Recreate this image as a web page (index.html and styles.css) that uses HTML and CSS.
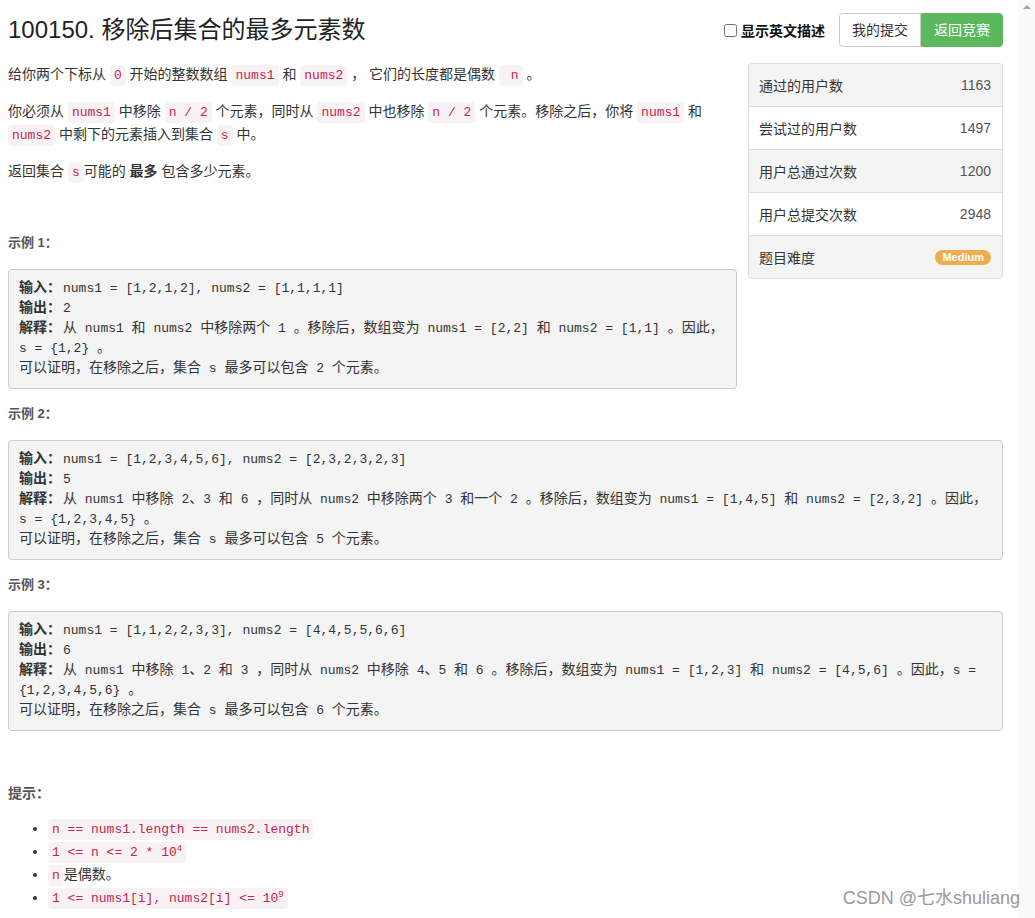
FILE: index.html
```html
<!DOCTYPE html>
<html lang="zh-CN">
<head>
<meta charset="utf-8">
<title>100150. 移除后集合的最多元素数</title>
<link rel="stylesheet" href="styles.css">
</head>
<body>
<div class="page">
  <main class="main">
    <header class="head">
      <h3 class="title"><span class="title-no">100150.</span> 移除后集合的最多元素数</h3>
      <div class="actions">
        <label class="toggle"><input type="checkbox" class="check"><span>显示英文描述</span></label>
        <div class="btn-group">
          <button class="btn">我的提交</button><button class="btn btn-success">返回竞赛</button>
        </div>
      </div>
    </header>

    <div class="content">
      <aside class="stats">
        <div class="row"><span>通过的用户数</span><span class="num">1163</span></div>
        <div class="row"><span>尝试过的用户数</span><span class="num">1497</span></div>
        <div class="row"><span>用户总通过次数</span><span class="num">1200</span></div>
        <div class="row"><span>用户总提交次数</span><span class="num">2948</span></div>
        <div class="row"><span>题目难度</span><span class="badge">Medium</span></div>
      </aside>

      <p>给你两个下标从 <code>0</code> 开始的整数数组 <code>nums1</code> 和 <code>nums2</code> ， 它们的长度都是偶数 <code>&nbsp;n</code> 。</p>
      <p>你必须从 <code>nums1</code> 中移除 <code>n / 2</code> 个元素，同时从 <code>nums2</code> 中也移除 <code>n / 2</code> 个元素。移除之后，你将 <code>nums1</code> 和 <code>nums2</code> 中剩下的元素插入到集合 <code>s</code> 中。</p>
      <p>返回集合 <code>s</code>可能的 <strong>最多</strong> 包含多少元素。</p>

      <p class="label first">示例 1：</p>
<pre class="example"><strong>输入：</strong>nums1 = [1,2,1,2], nums2 = [1,1,1,1]
<strong>输出：</strong>2
<strong>解释：</strong><span class="zh">从</span> nums1 <span class="zh">和</span> nums2 <span class="zh">中移除两个</span> 1 <span class="zh">。移除后，数组变为</span> nums1 = [2,2] <span class="zh">和</span> nums2 = [1,1] <span class="zh">。因此，</span>
s = {1,2} <span class="zh">。</span>
<span class="zh">可以证明，在移除之后，集合</span> s <span class="zh">最多可以包含</span> 2 <span class="zh">个元素。</span></pre>

      <p class="label">示例 2：</p>
<pre class="example"><strong>输入：</strong>nums1 = [1,2,3,4,5,6], nums2 = [2,3,2,3,2,3]
<strong>输出：</strong>5
<strong>解释：</strong><span class="zh">从</span> nums1 <span class="zh">中移除</span> 2<span class="zh">、</span>3 <span class="zh">和</span> 6 <span class="zh">，同时从</span> nums2 <span class="zh">中移除两个</span> 3 <span class="zh">和一个</span> 2 <span class="zh">。移除后，数组变为</span> nums1 = [1,4,5] <span class="zh">和</span> nums2 = [2,3,2] <span class="zh">。因此，</span>
s = {1,2,3,4,5} <span class="zh">。</span>
<span class="zh">可以证明，在移除之后，集合</span> s <span class="zh">最多可以包含</span> 5 <span class="zh">个元素。</span></pre>

      <p class="label">示例 3：</p>
<pre class="example"><strong>输入：</strong>nums1 = [1,1,2,2,3,3], nums2 = [4,4,5,5,6,6]
<strong>输出：</strong>6
<strong>解释：</strong><span class="zh">从</span> nums1 <span class="zh">中移除</span> 1<span class="zh">、</span>2 <span class="zh">和</span> 3 <span class="zh">，同时从</span> nums2 <span class="zh">中移除</span> 4<span class="zh">、</span>5 <span class="zh">和</span> 6 <span class="zh">。移除后，数组变为</span> nums1 = [1,2,3] <span class="zh">和</span> nums2 = [4,5,6] <span class="zh">。因此，</span>s =
{1,2,3,4,5,6} <span class="zh">。</span>
<span class="zh">可以证明，在移除之后，集合</span> s <span class="zh">最多可以包含</span> 6 <span class="zh">个元素。</span></pre>

      <p class="label hint">提示：</p>
      <ul class="hints">
        <li><code>n == nums1.length == nums2.length</code></li>
        <li><code>1 &lt;= n &lt;= 2 * 10<sup>4</sup></code></li>
        <li><code>n</code>是偶数。</li>
        <li><code>1 &lt;= nums1[i], nums2[i] &lt;= 10<sup>9</sup></code></li>
      </ul>
    </div>
  </main>
  <div class="scrollbar"><span class="arrow"></span></div>
  <div class="watermark">CSDN @七水shuliang</div>
</div>
</body>
</html>
```

FILE: styles.css
```css
html, body {
  margin: 0;
  padding: 0;
  height: 100%;
  overflow: hidden;
  background: #fff;
}

body {
  font-family: "Liberation Sans", "Noto Sans CJK SC", sans-serif;
  font-size: 14px;
  color: #333;
}

.page {
  position: relative;
  display: flex;
  height: 100vh;
}

.main {
  flex: 1;
  padding: 13px 15px 0 8px;
  min-width: 0;
}

.scrollbar {
  width: 17px;
  background: #fafafa;
  display: flex;
  justify-content: center;
  padding-top: 5px;
  box-sizing: border-box;
}

.arrow {
  width: 0;
  height: 0;
  border-left: 4px solid transparent;
  border-right: 4px solid transparent;
  border-bottom: 4px solid #a3a3a3;
}

.head {
  display: flex;
  align-items: center;
  justify-content: space-between;
  height: 34px;
  margin-bottom: 16px;
}

.title {
  margin: 0;
  font-size: 24px;
  line-height: 30px;
  font-weight: normal;
  color: #222;
}

.title-no {
  font-weight: 500;
}

.actions {
  display: flex;
  align-items: center;
  gap: 14px;
}

.toggle {
  display: flex;
  align-items: center;
  font-size: 14px;
  font-weight: bold;
  color: #111;
}

.check {
  width: 13px;
  height: 13px;
  margin: 0 4px 0 0;
}

.btn-group {
  display: flex;
}

.btn {
  font-family: "Liberation Sans", "Noto Sans CJK SC", sans-serif;
  font-size: 14px;
  line-height: 20px;
  padding: 6px 12px;
  border: 1px solid #ccc;
  background: #fff;
  color: #333;
  border-radius: 4px 0 0 4px;
}

.btn-success {
  background: #5cb85c;
  border-color: #5cb85c;
  color: #fff;
  border-radius: 0 4px 4px 0;
}

.content p {
  margin: 0 0 14px;
  line-height: 23px;
}

.stats {
  float: right;
  width: 255px;
  margin-left: 11px;
  border: 1px solid #ddd;
  border-radius: 4px;
  overflow: hidden;
  box-sizing: border-box;
}

.row {
  display: flex;
  align-items: center;
  justify-content: space-between;
  height: 42px;
  padding: 0 11px 0 10px;
  border-bottom: 1px solid #ddd;
  color: #333;
}

.row:last-child {
  border-bottom: 0;
}

.row:nth-child(odd) {
  background: #f4f4f4;
}

.num {
  color: #555;
}

.badge {
  background: #f0ad4e;
  color: #fff;
  font-size: 11px;
  font-weight: bold;
  line-height: 15px;
  padding: 0 7px;
  border-radius: 8px;
}

code {
  font-family: "Liberation Mono", "Noto Sans CJK SC", monospace;
  font-size: 13px;
  line-height: 1;
  padding: 3px 4px;
  color: #c7254e;
  background: #f9f2f4;
  border-radius: 4px;
}

sup {
  font-size: 9px;
  line-height: 0;
}

.content .label {
  margin: 0 0 16px;
  line-height: 20px;
  font-size: 13px;
  font-weight: bold;
  color: #555;
}

.content .label.first {
  margin-top: 50px;
}

.content .label.hint {
  margin-top: 52px;
  margin-bottom: 14px;
  font-size: 14px;
}

.example {
  display: flow-root;
  margin: 0 0 15px;
  padding: 9px 10px;
  background: #f4f4f4;
  border: 1px solid #ccc;
  border-radius: 4px;
  font-family: "Liberation Mono", "Noto Sans CJK SC", monospace;
  font-size: 13px;
  line-height: 20px;
  color: #333;
  white-space: pre;
}

.example strong,
.example .zh {
  font-family: "Liberation Sans", "Noto Sans CJK SC", sans-serif;
  font-size: 14px;
  line-height: 1;
}

.example strong {
  margin-right: 2px;
}

.hints {
  margin: 0;
  padding-left: 40px;
  line-height: 23px;
}

.watermark {
  position: absolute;
  right: 15px;
  bottom: 9px;
  font-size: 18px;
  line-height: 22px;
  color: #9a9a9a;
  text-shadow: 0 0 1px #fff;
}
```
